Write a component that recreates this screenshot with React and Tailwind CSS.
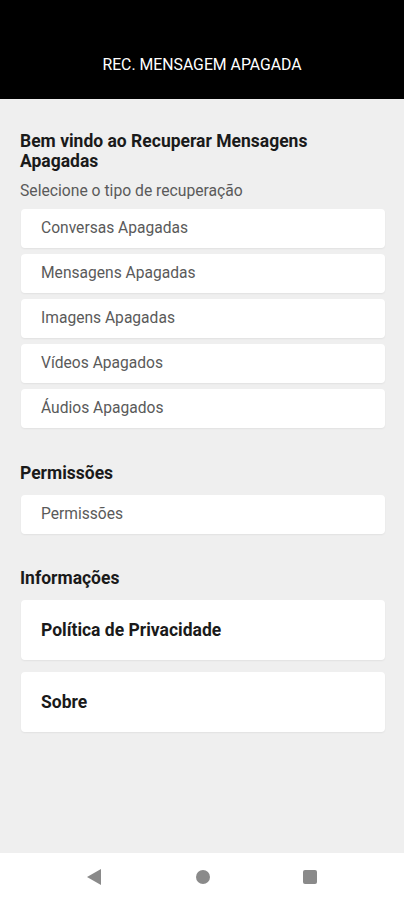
export default function App() {
  const items = [
    "Conversas Apagadas",
    "Mensagens Apagadas",
    "Imagens Apagadas",
    "Vídeos Apagados",
    "Áudios Apagados",
  ];
  return (
    <div
      className="flex h-[900px] w-[404px] flex-col overflow-hidden bg-[#efefef]"
      style={{ fontFamily: "Roboto, 'Noto Sans', sans-serif" }}
    >
      <header className="flex h-[99px] shrink-0 items-end justify-center bg-black pb-[24px]">
        <span className="text-[15.8px] leading-[20px] text-white">REC. MENSAGEM APAGADA</span>
      </header>

      <main className="flex flex-1 flex-col pl-[21px] pr-[19px] pt-[32px]">
        <h1 className="-ml-px w-[330px] text-[17.5px] font-bold leading-[20px] text-[#1a1a1a]">
          Bem vindo ao Recuperar Mensagens Apagadas
        </h1>
        <p className="-ml-px mt-[10px] text-[15.7px] leading-[20px] text-[#5a5a5a]">
          Selecione o tipo de recuperação
        </p>
        <div className="mt-[8px] flex flex-col gap-[6px]">
          {items.map((t) => (
            <div
              key={t}
              className="flex h-[39px] items-center rounded-[4px] bg-white pl-[20px] text-[15.6px] text-[#5a5a5a] shadow-[0_1px_2px_rgba(0,0,0,0.06)]"
            >
              {t}
            </div>
          ))}
        </div>

        <h2 className="-ml-px mt-[35px] text-[17.5px] font-bold leading-[20px] text-[#1a1a1a]">Permissões</h2>
        <div className="mt-[12px] flex h-[39px] items-center rounded-[4px] bg-white pl-[20px] text-[15.6px] text-[#5a5a5a] shadow-[0_1px_2px_rgba(0,0,0,0.06)]">
          Permissões
        </div>

        <h2 className="-ml-px mt-[34px] text-[17.5px] font-bold leading-[20px] text-[#1a1a1a]">Informações</h2>
        <div className="mt-[12px] flex flex-col gap-[12px]">
          {["Política de Privacidade", "Sobre"].map((t) => (
            <div
              key={t}
              className="flex h-[60px] items-center rounded-[4px] bg-white pl-[20px] text-[17.5px] font-bold text-[#1a1a1a] shadow-[0_1px_2px_rgba(0,0,0,0.06)]"
            >
              {t}
            </div>
          ))}
        </div>
      </main>

      <nav className="relative h-[47px] shrink-0 bg-white">
        <svg className="absolute left-[87px] top-[16px]" width="14" height="16" viewBox="0 0 14 16">
          <path d="M14 0 L14 16 L0 8 Z" fill="#8a8a8a" />
        </svg>
        <div className="absolute left-[196px] top-[17px] h-[14px] w-[14px] rounded-full bg-[#8a8a8a]" />
        <div className="absolute left-[303px] top-[17px] h-[14px] w-[14px] rounded-[2px] bg-[#8a8a8a]" />
      </nav>
    </div>
  );
}
